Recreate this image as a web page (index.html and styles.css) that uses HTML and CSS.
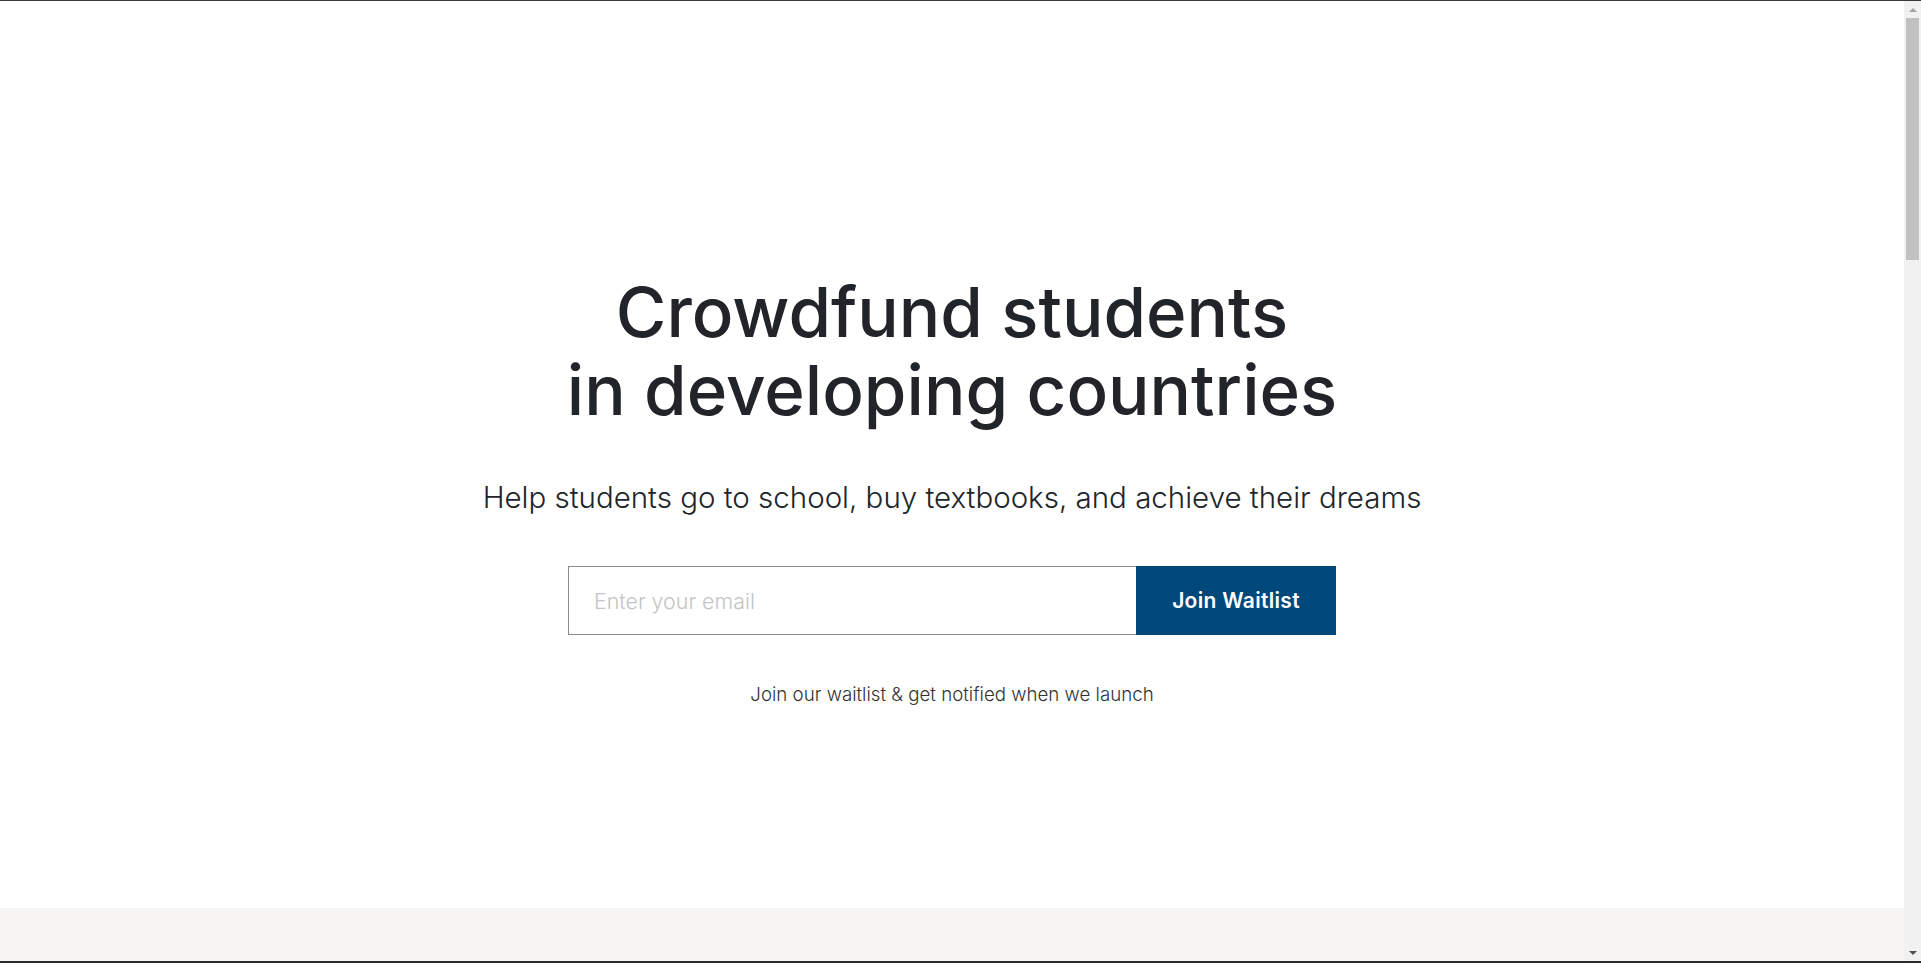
FILE: index.html
```html
<!DOCTYPE html>
<html lang="en">
<head>
<meta charset="utf-8">
<title>Crowdfund students in developing countries</title>
<link rel="stylesheet" href="styles.css">
</head>
<body>
<div class="window">
  <main class="page">
    <section class="hero">
      <h1 class="hero-title">Crowdfund students<br>in developing countries</h1>
      <p class="hero-sub">Help students go to school, buy textbooks, and achieve their dreams</p>
      <form class="waitlist" onsubmit="return false;">
        <input class="waitlist-input" type="email" placeholder="Enter your email">
        <button class="waitlist-btn" type="submit">Join Waitlist</button>
      </form>
      <p class="hero-note">Join our waitlist &amp; get notified when we launch</p>
    </section>
    <section class="below"></section>
  </main>
  <div class="scrollbar" aria-hidden="true">
    <div class="sb-btn"><span class="sb-arrow-up"></span></div>
    <div class="sb-thumb"></div>
    <div class="sb-track"></div>
    <div class="sb-btn"><span class="sb-arrow-down"></span></div>
  </div>
</div>
</body>
</html>
```

FILE: styles.css
```css
html, body {
  margin: 0;
  padding: 0;
  overflow: hidden;
}
body {
  background: #ffffff;
  color: #212529;
  font-family: Inter, "Noto Sans", "Liberation Sans", sans-serif;
}
.window {
  display: flex;
  height: 963px;
  box-sizing: border-box;
  border-top: 1px solid #3a3a3a;
  border-bottom: 2px solid #2a2a2a;
  overflow: hidden;
}
.page {
  flex: 1;
  display: flex;
  flex-direction: column;
  min-width: 0;
}
.hero {
  height: 907px;
  flex: none;
  box-sizing: border-box;
  padding-top: 272px;
  display: flex;
  flex-direction: column;
  align-items: center;
  background: #ffffff;
}
.hero-title {
  margin: 0;
  font-size: 69px;
  line-height: 78px;
  font-weight: 500;
  text-align: center;
  color: #212529;
}
.hero-sub {
  margin: 48px 0 0;
  font-size: 29.5px;
  line-height: 40px;
  font-weight: 300;
  color: #212529;
  text-align: center;
}
.waitlist {
  margin: 49px 0 0;
  display: flex;
  width: 768px;
  height: 69px;
}
.waitlist-input {
  flex: 1;
  min-width: 0;
  box-sizing: border-box;
  height: 100%;
  border: 1px solid #8a8a8a;
  border-right: none;
  padding: 0 25px;
  font-family: Inter, "Noto Sans", sans-serif;
  font-size: 21.4px;
  font-weight: 300;
  color: #212529;
  outline: none;
  background: #fff;
}
.waitlist-input::placeholder {
  color: #c4c4c4;
}
.waitlist-btn {
  flex: none;
  width: 200px;
  height: 100%;
  border: none;
  background: #00477a;
  color: #ffffff;
  font-family: Inter, "Noto Sans", sans-serif;
  font-size: 21px;
  font-weight: 600;
  letter-spacing: 0.3px;
  cursor: pointer;
}
.hero-note {
  margin: 47px 0 0;
  font-size: 18.7px;
  line-height: 26px;
  font-weight: 300;
  color: #333333;
  text-align: center;
}
.below {
  flex: 1;
  background: #f6f5f3;
}
.scrollbar {
  flex: none;
  width: 17px;
  background: #f1f1f1;
  display: flex;
  flex-direction: column;
}
.sb-btn {
  height: 17px;
  flex: none;
  display: flex;
  align-items: center;
  justify-content: center;
}
.sb-arrow-up {
  width: 0;
  height: 0;
  border-left: 4px solid transparent;
  border-right: 4px solid transparent;
  border-bottom: 4px solid #a3a3a3;
}
.sb-arrow-down {
  width: 0;
  height: 0;
  border-left: 4px solid transparent;
  border-right: 4px solid transparent;
  border-top: 4px solid #505050;
}
.sb-thumb {
  flex: none;
  height: 242px;
  margin: 0 2px;
  background: #c1c1c1;
}
.sb-track {
  flex: 1;
}
```
